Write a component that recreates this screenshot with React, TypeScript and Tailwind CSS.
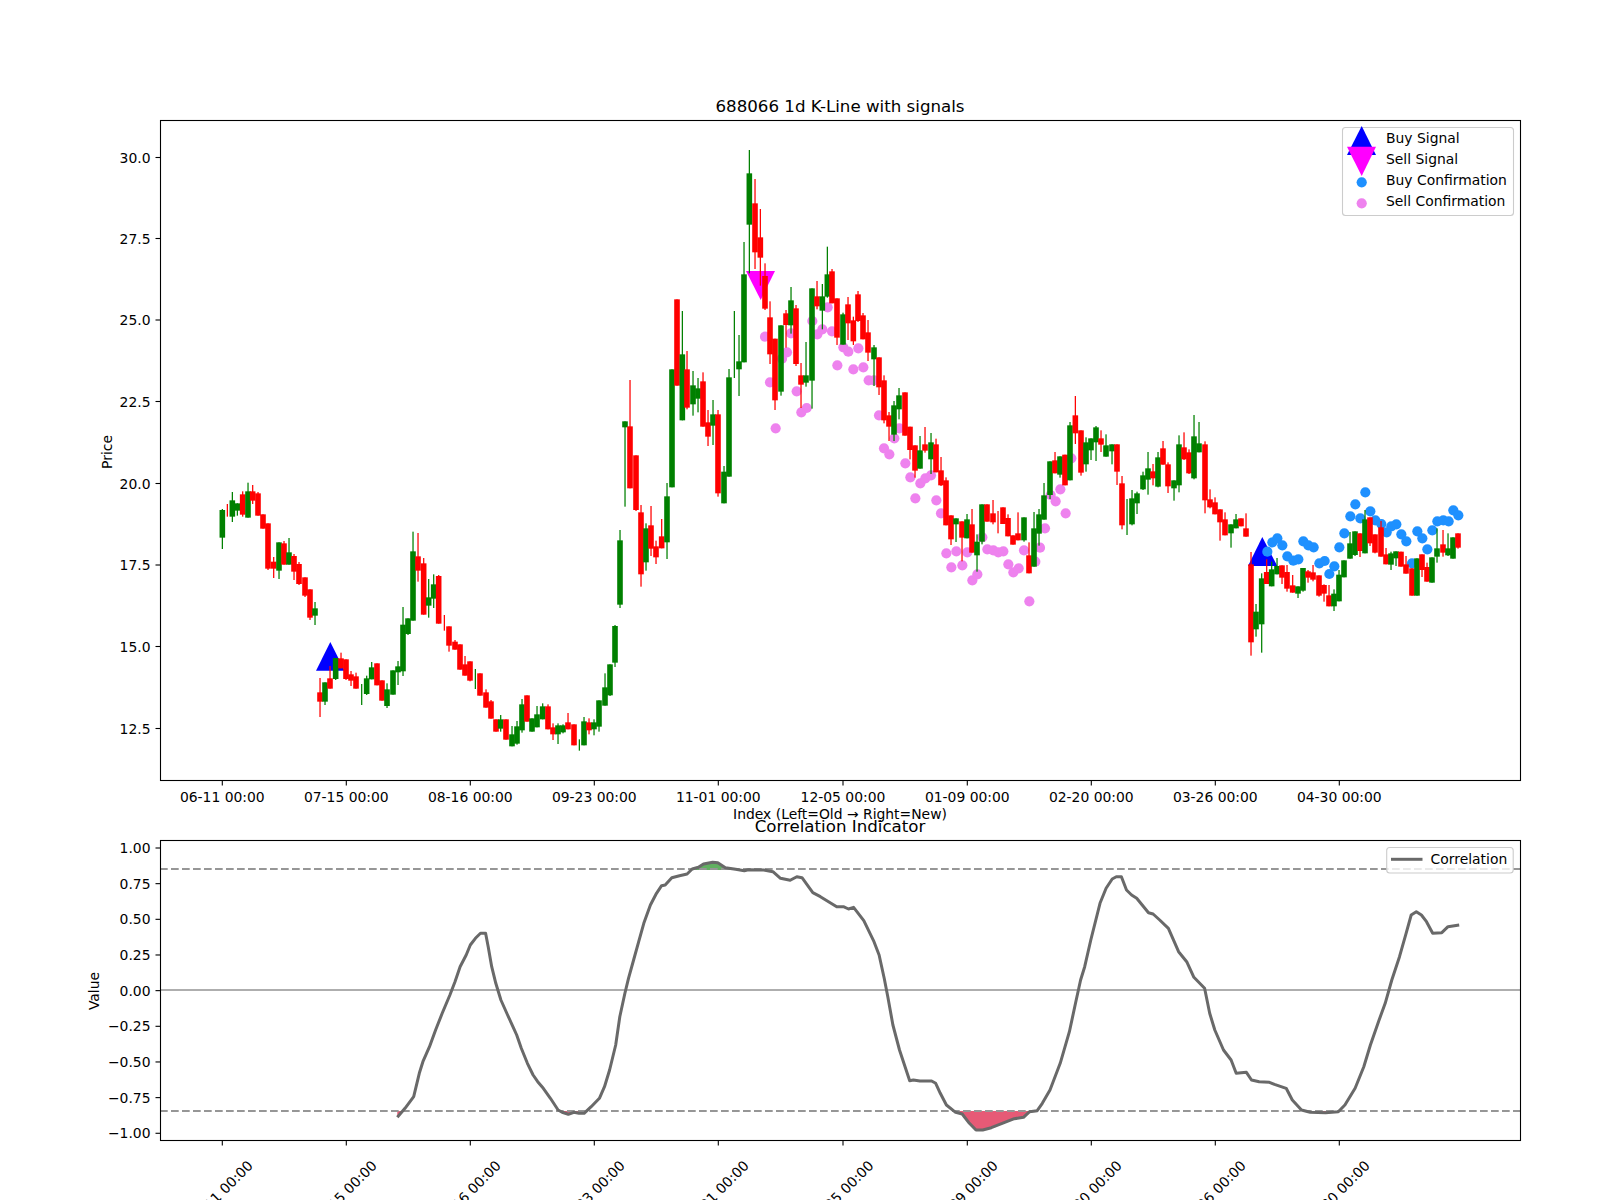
import React from 'react';

type Row = [number, number, number, number, number, number];

// candles read off the chart: x, body top, body bottom, wick top, wick bottom, green?
const sectionA: Row[] = [
  [67,180,263,177,297,1],[82,162,163,162,200,0],[97,151,200,126,216,1],[112,160,182,160,197,1],[128,133,194,124,200,0],
  [144,124,203,98,203,1],[158,124,152,105,162,0],[174,130,197,126,197,0],[189,193,236,193,236,0],[204,220,356,220,360,0],
  [221,335,356,321,384,0],[237,277,362,277,387,1],[252,280,344,273,344,0],[267,307,344,264,344,1],[282,318,365,312,390,0],
  [297,342,402,336,405,0],[315,382,437,382,441,0],[330,418,503,418,510,0],[345,475,497,456,525,1],[360,727,755,684,801,0],
  [375,697,755,697,765,1],[390,685,716,648,716,0],[407,624,687,624,690,1],[423,625,655,608,655,0],[438,628,687,628,690,0],
  [453,673,692,663,708,0],[468,679,716,668,716,0],[485,702,703,702,765,1],[500,685,732,677,735,1],[515,652,688,636,688,1],
  [531,640,706,640,706,0],[546,691,752,691,752,0],[561,718,768,700,774,1],[579,661,734,661,734,1],[594,649,667,633,705,1],
  [609,524,664,471,678,1],[624,505,552,505,555,1],[639,304,512,245,512,1],[654,319,362,249,395,0],[671,340,494,324,494,0],
  [686,442,467,387,503,1],[701,403,446,373,474,1],[716,378,521,375,521,0],[733,497,498,495,542,0],[747,529,587,529,605,0],
  [765,575,599,570,599,0],[780,583,659,583,659,0],[795,643,677,618,677,0],[810,634,692,634,694,0],[826,659,660,657,717,1],
  [840,670,737,670,737,0],[858,727,773,718,773,0],[873,754,806,750,806,0],[888,808,845,808,845,0],[902,808,836,795,845,1],
  [918,808,869,808,869,0],[936,853,889,828,889,1],[951,829,881,813,884,1],[966,763,841,747,848,1],[981,736,815,736,815,0],
  [996,805,845,805,845,1],[1011,793,832,768,832,1],[1028,769,808,760,808,1],[1044,769,838,763,838,0],[1059,832,853,820,870,0],
  [1074,826,853,820,882,1],[1089,826,847,823,850,1],[1104,817,838,789,838,0],[1122,823,886,823,886,0],[1138,868,869,868,902,1],
  [1152,814,886,801,886,1],[1167,817,841,805,853,0],[1182,817,838,808,856,1],[1197,751,830,751,845,1],
];

const sectionC: Row[] = [
  [15,1672,1727,1630,1727,1],[30,1603,1696,1603,1698,1],[45,1488,1598,1485,1611,1],[60,1231,1424,1200,1434,1],[75,874,892,874,1130,1],
  [90,889,1075,750,1075,0],[108,976,1140,976,1143,0],[123,1147,1333,1125,1370,0],[138,1195,1297,1180,1322,1],[153,1186,1256,1128,1278,0],
  [168,1249,1282,1232,1302,0],[185,1219,1255,1167,1255,0],[201,1099,1237,1059,1287,1],[216,718,1072,718,1072,1],[231,508,767,508,767,0],
  [247,673,871,543,871,1],[261,718,833,663,838,0],[279,766,823,723,857,1],[294,775,806,744,847,1],[309,754,890,727,890,0],
  [324,877,920,840,948,0],[339,853,887,810,945,1],[354,853,1090,840,1100,0],[372,1025,1120,1008,1120,1],[387,742,1040,717,1040,1],
  [403,543,544,543,744,1],[417,694,718,615,798,1],[432,433,697,336,697,1],[448,130,284,60,430,1],[465,220,367,147,417,0],
  [481,322,383,237,467,0],[495,438,536,400,540,0],[510,562,673,514,702,0],[525,626,811,626,840,0],[543,586,785,586,797,1],
  [558,550,585,540,653,0],[573,511,586,471,611,1],[588,535,702,525,708,0],[603,736,764,699,834,0],[618,736,758,636,770,1],
  [636,475,752,475,836,1],[651,499,529,453,538,0],[667,499,542,462,598,1],[682,433,500,350,503,1],[696,424,520,417,520,0],
  [711,505,623,505,645,0],[729,553,644,548,644,1],[744,523,580,501,630,0],[760,571,634,560,645,0],[774,493,573,483,576,0],
  [789,556,628,549,628,0],[804,607,668,570,693,0],[822,652,688,645,768,1],[837,682,772,682,795,0],[852,751,871,736,880,0],
  [867,856,890,846,933,0],[882,826,914,813,933,1],[897,796,838,774,868,1],[915,787,917,787,917,0],
];

const sectionD: Row[] = [
  [180,530,600,530,628,0],[195,586,662,586,683,0],[210,601,656,558,656,1],[225,583,602,531,608,0],[243,577,628,549,672,1],
  [258,583,667,566,667,0],[273,661,706,621,708,0],[288,691,826,682,826,0],[303,796,868,796,885,0],[318,805,823,805,876,1],
  [336,814,863,814,934,0],[351,808,865,792,865,1],[366,823,908,777,908,0],[381,875,916,853,965,1],[396,763,875,763,883,1],
  [411,763,815,763,815,0],[429,790,817,750,823,0],[444,783,784,783,850,0],[459,772,822,772,822,0],[474,804,859,793,859,0],
  [489,856,884,856,884,0],[504,850,871,787,871,0],[522,802,871,802,875,1],[537,916,970,877,970,0],[552,835,950,786,950,1],
  [567,793,851,777,887,1],[582,736,809,699,809,1],[600,634,735,634,747,1],[615,631,670,606,670,0],[630,619,674,619,683,1],
  [645,614,706,614,706,0],[660,526,691,516,691,1],[676,496,550,438,582,0],[693,541,668,541,677,0],[708,577,643,562,665,1],
  [723,565,601,565,630,1],[738,532,577,528,633,1],[753,565,584,541,606,0],[768,586,620,553,620,1],[786,583,604,583,643,1],
  [801,583,665,583,705,0],[816,700,826,678,838,0],[831,747,748,747,855,1],[846,745,823,720,826,1],[861,730,760,725,792,1],
  [879,676,718,665,720,1],[894,655,689,606,734,1],[909,664,685,642,706,0],[924,622,710,606,712,1],[939,595,644,573,644,0],
  [954,643,709,637,729,0],[972,691,715,691,752,1],[987,583,706,556,727,1],[1002,592,628,547,630,0],[1017,607,670,598,672,0],
  [1032,559,685,495,688,1],[1047,580,607,516,607,1],[1065,583,751,574,790,0],[1080,748,772,718,775,0],[1095,757,793,742,793,0],
  [1110,778,817,778,872,0],[1125,808,856,787,856,0],[1143,823,850,823,893,1],[1158,808,835,792,835,1],[1173,805,829,805,829,0],
  [1188,835,860,790,860,0],
];

const sectionE: Row[] = [
  [93,343,577,306,617,0],[108,485,538,462,560,1],[125,385,523,370,608,1],[140,366,402,328,402,0],[155,358,409,335,409,1],
  [171,348,373,324,373,1],[186,346,383,346,402,0],[201,366,416,345,425,0],[218,406,428,375,428,0],[234,409,431,409,444,1],
  [249,354,422,354,425,1],[264,364,383,360,398,0],[279,367,389,345,394,0],[297,376,437,376,440,0],[312,405,431,403,455,0],
  [327,436,469,405,469,0],[342,431,469,418,483,1],[357,374,454,360,454,1],[372,331,382,331,382,1],[390,280,326,246,326,1],
  [405,244,315,244,318,1],[420,250,303,250,321,0],[435,208,310,180,310,1],[450,202,280,202,288,0],[465,253,308,253,310,0],
  [483,232,320,213,320,0],[498,313,343,294,343,0],[513,310,344,305,360,1],[528,304,325,304,348,1],[543,305,350,305,350,0],
  [558,343,371,318,371,0],[576,355,437,355,437,0],[591,325,437,325,437,1],[606,313,360,313,381,0],[621,351,395,338,395,0],
  [636,322,398,322,398,1],[651,295,320,235,338,1],[669,283,308,240,320,0],[684,295,316,250,318,1],[699,262,326,262,326,1],
  [714,250,293,250,296,0],
];

const place = (ox: number, oy: number, rows: Row[]) =>
  rows.map(([x, a, b, c, d, g]) => ({
    x: ox + x / 3,
    top: oy + a / 3,
    bottom: oy + b / 3,
    high: oy + c / 3,
    low: oy + d / 3,
    color: g ? '#008000' : '#ff0000',
  }));

const candles = [
  ...place(200, 450, sectionA),
  ...place(600, 130, sectionC),
  ...place(850, 250, sectionD),
  ...place(1220, 450, sectionE),
];

const sellDots = [
  ...[[495,620],[510,757],[527,895],[546,686],[561,667],[573,610],[590,784],[604,847],[620,834],[637,573],[652,613],[667,598],[683,532],[696,604],[712,706],[730,652],[745,665],[760,718],[775,655],[790,712],[806,751],[822,751]]
    .map(([x, y]) => [600 + x / 3, 130 + y / 3]),
  ...[[87,496],[102,595],[118,613],[133,565],[148,535],[166,640],[181,682],[196,745],[211,700],[226,685],[243,676],[259,751],[273,790],[289,910],[304,952],[319,904],[337,946],[352,907],[367,991],[382,973],[397,862],[412,898],[430,901],[445,907],[460,904],[475,943],[490,967],[506,955],[522,901],[538,1054],[556,935],[570,893],[585,835],[602,735],[617,754],[631,718],[647,790],[664,625]]
    .map(([x, y]) => [850 + x / 3, 250 + y / 3]),
];

const buyDots = [[142,305],[157,277],[172,265],[187,286],[202,319],[220,332],[235,328],[250,274],[265,286],[281,292],[298,340],[314,333],[328,372],[343,349],[358,292],[373,250],[391,199],[406,163],[421,205],[436,127],[451,184],[466,211],[484,222],[500,247],[514,229],[529,223],[544,253],[559,274],[576,340],[592,244],[607,265],[622,298],[637,241],[652,214],[670,211],[686,214],[700,181],[715,196]]
  .map(([x, y]) => [1220 + x / 3, 450 + y / 3]);

const corrLeft = [[622,1042],[637,1015],[654,980],[665,910],[672,875],[685,830],[697,780],[710,730],[725,675],[735,635],[745,590],[757,555],[765,525],[775,505],[785,490],[795,490],[800,530],[807,590],[815,640],[825,690],[838,735],[850,775],[856,795],[865,835],[877,880],[888,915],[897,935],[908,955],[922,985],[937,1020],[945,1027],[957,1033],[968,1027],[978,1030],[988,1030],[1002,1010],[1018,985],[1028,950],[1038,900],[1050,825],[1058,740],[1068,670],[1075,625],[1085,570],[1095,515],[1105,460],[1118,405],[1130,370],[1140,347],[1147,345],[1160,323],[1175,317],[1190,312],[1200,297],[1212,292],[1222,282],[1240,277],[1250,278],[1265,293],[1285,298],[1302,302],[1310,299],[1340,300],[1358,305],[1373,325],[1392,331],[1405,320]]
  .map(([x, y]) => [80 + x / 1.96, 770 + y / 3]);
const corrRight = [[4,323],[25,368],[40,380],[72,410],[85,410],[95,417],[105,412],[125,452],[145,515],[155,555],[165,625],[172,680],[182,765],[195,840],[215,932],[222,930],[235,933],[258,933],[266,940],[275,970],[287,1005],[305,1027],[318,1032],[332,1060],[345,1080],[358,1080],[375,1073],[400,1058],[420,1046],[438,1042],[450,1025],[465,1022],[475,1000],[490,960],[510,880],[528,785],[540,700],[550,630],[558,590],[570,510],[588,400],[600,355],[612,327],[620,320],[630,320],[640,360],[650,375],[660,385],[683,428],[692,432],[705,450],[722,475],[742,545],[758,575],[772,622],[793,655],[803,730],[813,780],[830,840],[845,870],[855,910],[875,907],[885,930],[900,935],[920,937],[930,943],[953,955],[965,990],[983,1020],[1000,1027],[1030,1028],[1055,1025],[1068,1005],[1088,955],[1105,890],[1118,825],[1135,750],[1147,700],[1160,630],[1175,560],[1188,490],[1198,435],[1208,425],[1218,435],[1228,455],[1240,490],[1258,488],[1270,470],[1292,465]]
  .map(([x, y]) => [800 + x / 1.96, 770 + y / 3]);

const corrPoints = [...corrLeft, ...corrRight];
const corrLine = corrPoints.map(([x, y]) => `${x.toFixed(1)},${y.toFixed(1)}`).join(' ');
const first = corrPoints[0][0].toFixed(1);
const last = corrPoints[corrPoints.length - 1][0].toFixed(1);

const tickX = [222.3, 346.3, 470.3, 594.3, 718.3, 843, 967.3, 1091.3, 1215.3, 1339.3];
const dates = ['06-11 00:00', '07-15 00:00', '08-16 00:00', '09-23 00:00', '11-01 00:00', '12-05 00:00', '01-09 00:00', '02-20 00:00', '03-26 00:00', '04-30 00:00'];
const priceTicks: [string, number][] = [['30.0', 157.5], ['27.5', 238.5], ['25.0', 320], ['22.5', 401.5], ['20.0', 483.5], ['17.5', 565], ['15.0', 646.5], ['12.5', 728.5]];
const valueTicks = ['1.00', '0.75', '0.50', '0.25', '0.00', '−0.25', '−0.50', '−0.75', '−1.00'];

function PriceChart() {
  return (
    <svg viewBox="0 0 1600 825" className="block w-[1600px] h-[825px] overflow-visible fill-black text-[13.9px] font-['DejaVu_Sans',sans-serif]">
      <text x="840" y="111.7" textAnchor="middle" className="text-[16.67px]">688066 1d K-Line with signals</text>

      <polygon points="330.3,642 316,670.7 344.7,670.7" fill="#0000ff" />
      <polygon points="1262.3,537 1248,566 1277.3,566" fill="#0000ff" />
      <polygon points="760.7,300 746,271 775,271" fill="#ff00ff" />

      {sellDots.map(([x, y], i) => <circle key={i} cx={x} cy={y} r="5.1" fill="#ee82ee" />)}
      {buyDots.map(([x, y], i) => <circle key={i} cx={x} cy={y} r="5.1" fill="#1e90ff" />)}

      {candles.map((c, i) => (
        <g key={i} fill={c.color}>
          <rect x={c.x - 0.6} y={c.high} width="1.25" height={c.low - c.high} />
          {c.bottom - c.top > 1 && <rect x={c.x - 2.8} y={c.top} width="5.6" height={c.bottom - c.top} />}
        </g>
      ))}

      <rect x="160.5" y="120.5" width="1360" height="660" fill="none" stroke="#000" strokeWidth="1.1" />

      {priceTicks.map(([label, y]) => (
        <g key={label}>
          <line x1="155.5" x2="160" y1={y} y2={y} stroke="#000" strokeWidth="1.1" />
          <text x="150.5" y={y + 5} textAnchor="end">{label}</text>
        </g>
      ))}
      {tickX.map((x, i) => (
        <g key={x}>
          <line x1={x} x2={x} y1="781" y2="785.5" stroke="#000" strokeWidth="1.1" />
          <text x={x} y="801.5" textAnchor="middle">{dates[i]}</text>
        </g>
      ))}

      <text x="840" y="819" textAnchor="middle">Index (Left=Old → Right=New)</text>
      <text transform="translate(111.5 452) rotate(-90)" textAnchor="middle">Price</text>

      <rect x="1342.5" y="127.5" width="171" height="88" rx="3" fill="#fff" fillOpacity="0.8" stroke="#ccc" strokeWidth="1.1" />
      <polygon points="1361.7,126 1347,155 1376,155" fill="#0000ff" />
      <polygon points="1361.7,176 1347,146.7 1376,146.7" fill="#ff00ff" />
      <circle cx="1361.7" cy="182.3" r="5.1" fill="#1e90ff" />
      <circle cx="1361.7" cy="203.3" r="5.1" fill="#ee82ee" />
      <text x="1386" y="143.3">Buy Signal</text>
      <text x="1386" y="164.3">Sell Signal</text>
      <text x="1386" y="185.2">Buy Confirmation</text>
      <text x="1386" y="206.3">Sell Confirmation</text>
    </svg>
  );
}

function CorrelationChart() {
  return (
    <svg viewBox="0 825 1600 375" className="block w-[1600px] h-[375px] overflow-visible fill-black text-[13.9px] font-['DejaVu_Sans',sans-serif]">
      <defs>
        <clipPath id="above"><rect x="160" y="840" width="1360" height="30" /></clipPath>
        <clipPath id="below"><rect x="160" y="1111" width="1360" height="29" /></clipPath>
      </defs>
      <text x="840" y="832" textAnchor="middle" className="text-[16.67px]">Correlation Indicator</text>

      <polygon points={`${corrLine} ${last},870 ${first},870`} fill="#008000" fillOpacity="0.62" clipPath="url(#above)" />
      <polygon points={`${corrLine} ${last},1111 ${first},1111`} fill="#dc143c" fillOpacity="0.7" clipPath="url(#below)" />

      <line x1="160" x2="1520" y1="990" y2="990" stroke="#aeaeae" strokeWidth="2" />
      <line x1="160" x2="1520" y1="869" y2="869" stroke="#969696" strokeWidth="2.1" strokeDasharray="7.7 3.3" />
      <line x1="160" x2="1520" y1="1111" y2="1111" stroke="#969696" strokeWidth="2.1" strokeDasharray="7.7 3.3" />
      <polyline points={corrLine} fill="none" stroke="#696969" strokeWidth="3" strokeLinejoin="round" />

      <rect x="160.5" y="840.5" width="1360" height="300" fill="none" stroke="#000" strokeWidth="1.1" />

      {valueTicks.map((label, i) => {
        const y = 848 + i * 35.66;
        return (
          <g key={label}>
            <line x1="155.5" x2="160" y1={y} y2={y} stroke="#000" strokeWidth="1.1" />
            <text x="150.5" y={y + 5} textAnchor="end">{label}</text>
          </g>
        );
      })}
      {tickX.map((x, i) => (
        <g key={x}>
          <line x1={x} x2={x} y1="1141" y2="1145.5" stroke="#000" strokeWidth="1.1" />
          <text transform={`translate(${x - 2} 1193) rotate(-45)`} textAnchor="middle" dominantBaseline="central">{dates[i]}</text>
        </g>
      ))}

      <text transform="translate(99 991) rotate(-90)" textAnchor="middle">Value</text>

      <rect x="1386.7" y="847.5" width="126.5" height="25.5" rx="3" fill="#fff" fillOpacity="0.8" stroke="#ccc" strokeWidth="1.1" />
      <line x1="1391" x2="1422.5" y1="859.3" y2="859.3" stroke="#696969" strokeWidth="3" />
      <text x="1430.6" y="863.8">Correlation</text>
    </svg>
  );
}

export default function App() {
  return (
    <div className="flex flex-col w-[1600px] h-[1200px] overflow-hidden bg-white">
      <PriceChart />
      <CorrelationChart />
    </div>
  );
}
